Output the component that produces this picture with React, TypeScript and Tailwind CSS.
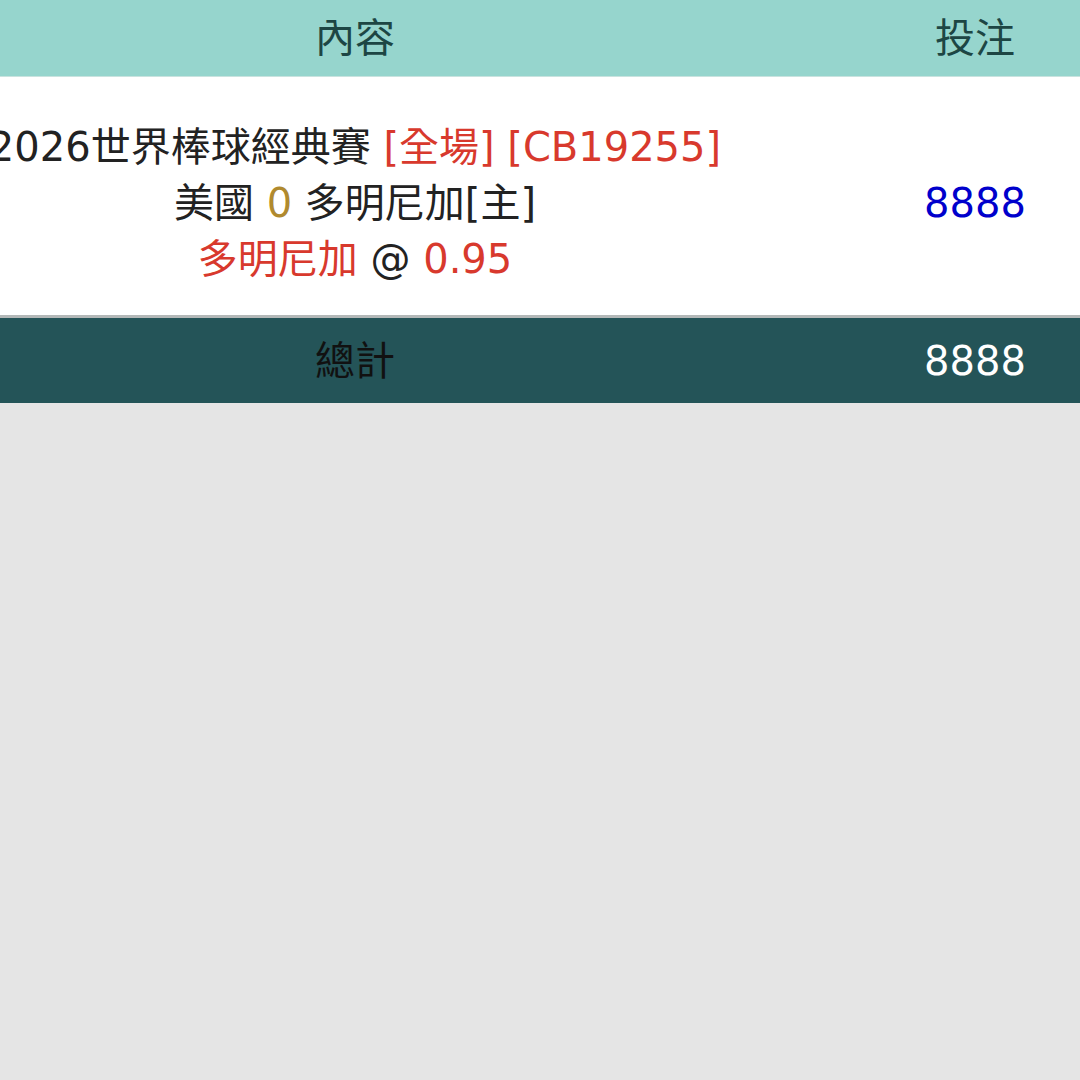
export default function App() {
  return (
    <main
      className="min-h-screen w-full overflow-hidden bg-[#e5e5e5] text-[40px]"
      style={{ fontFamily: '"DejaVu Sans", "Noto Sans CJK TC", sans-serif' }}
    >
      {/* header */}
      <div className="flex h-[77px] items-center bg-[#96d5cd] text-[#1d4644] border-b border-[#c9e3df]">
        <div className="flex w-[710px] justify-center">內容</div>
        <div className="flex-1" />
        <div className="flex w-[210px] justify-center">投注</div>
      </div>

      {/* bet row */}
      <div className="flex items-center bg-white pt-[42px] pb-[28px] border-b-[3px] border-[#b3b8b8]">
        <div className="flex w-[710px] flex-col items-center leading-[56px] text-[#222]">
          <div className="whitespace-nowrap">
            2026世界棒球經典賽 <span className="text-[#d8392d]">[全場] [CB19255]</span>
          </div>
          <div className="whitespace-nowrap">
            美國 <span className="text-[#b08a2e]">0</span> 多明尼加[主]
          </div>
          <div className="whitespace-nowrap">
            <span className="text-[#d8392d]">多明尼加</span> @ <span className="text-[#d8392d]">0.95</span>
          </div>
        </div>
        <div className="flex-1" />
        <div className="flex w-[210px] justify-center text-[#0000cc]">8888</div>
      </div>

      {/* total */}
      <div className="flex h-[85px] items-center bg-[#245458]">
        <div className="flex w-[710px] justify-center text-[#111]">總計</div>
        <div className="flex-1" />
        <div className="flex w-[210px] justify-center text-white">8888</div>
      </div>
    </main>
  );
}
